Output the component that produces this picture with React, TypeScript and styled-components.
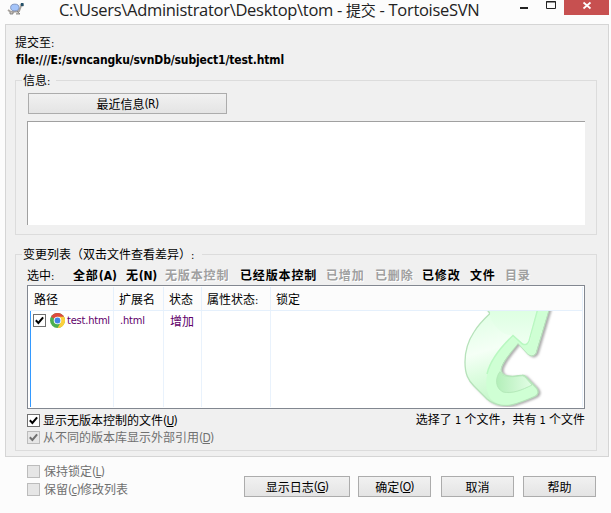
import React from "react";
import styled, { createGlobalStyle } from "styled-components";

const GlobalStyle = createGlobalStyle`
  *, *::before, *::after { box-sizing: border-box; }
  body { margin: 0; background: #fcfcfc; }
`;

const Window = styled.div`
  width: 611px;
  height: 513px;
  display: flex;
  flex-direction: column;
  background: #fcfcfc;
  color: #000;
  font: 12px/16px "Noto Sans CJK SC", sans-serif;
  white-space: nowrap;
`;

const Latin = styled.span<{ $size?: number; $spacing?: number; $bold?: boolean }>`
  font-family: "DejaVu Sans Condensed", "DejaVu Sans", sans-serif;
  font-stretch: condensed;
  font-size: ${(p) => p.$size ?? 11}px;
  letter-spacing: ${(p) => p.$spacing ?? 0}px;
  font-weight: ${(p) => (p.$bold ? 700 : 400)};
`;

const TitleBar = styled.header`
  flex: none;
  height: 24px;
  display: flex;
  align-items: flex-start;
  padding-left: 7px;
`;

const AppIcon = styled.svg`
  flex: none;
  width: 18px;
  height: 14px;
  margin-top: 2px;
`;

const Title = styled.h1`
  flex: none;
  margin: 0 0 0 34px;
  width: 454px;
  height: 24px;
  font: 400 16.5px/20px "Open Sans", "Noto Sans CJK SC", sans-serif;
  letter-spacing: -0.29px;
  color: #222;
`;

const TitleHan = styled.span`
  font-size: 15px;
`;

const WindowButtons = styled.svg`
  flex: none;
  width: 98px;
  height: 15px;
`;

const Content = styled.main`
  flex: none;
  width: 604px;
  height: 433px;
  margin-left: 5px;
  padding: 9px 11px 5px 9px;
  border: 1px solid #d5d5d5;
  background: #f0f0f0;
`;

const Label = styled.div`
  height: 16px;
`;

const Url = styled.div`
  height: 16px;
  margin: 1px 0 0 1px;
`;

const Group = styled.fieldset<{ $height: number; $gap: number }>`
  display: block;
  margin: ${(p) => p.$gap}px 0 0;
  padding: 0 11px;
  min-width: 0;
  width: 582px;
  height: ${(p) => p.$height}px;
  border: 1px solid #dcdcdc;
`;

const Legend = styled.legend<{ $width: number }>`
  margin-left: -5px;
  padding: 0 0 0 1px;
  width: ${(p) => p.$width}px;
  height: 16px;
`;

const Button = styled.button<{ $width: number }>`
  display: flex;
  align-items: center;
  justify-content: center;
  width: ${(p) => p.$width}px;
  height: 21px;
  padding: 0;
  border: 1px solid #acacac;
  background: linear-gradient(#f1f1f1, #e4e4e4);
  color: #000;
  font: inherit;
`;

const RecentButton = styled(Button)`
  margin: 5px 0 0 1px;
`;

const Message = styled.textarea`
  display: block;
  width: 558px;
  height: 104px;
  margin-top: 7px;
  padding: 0;
  border: 0 solid #a0a0a0;
  border-width: 1px 0 0 1px;
  background: #fff;
  resize: none;
`;

const Filters = styled.nav`
  display: grid;
  grid-template-columns: 46px 53px 39px 75px 86px 49px 47px 48px 35px 40px;
  height: 20px;
  margin-top: 3px;
  line-height: 20px;
`;

const Filter = styled.span<{ $off?: boolean }>`
  font-weight: 700;
  letter-spacing: 0.85px;
  color: ${(p) => (p.$off ? "#a0a0a0" : "#000")};
  text-shadow: ${(p) => (p.$off ? "1px 1px 0 #fff" : "none")};
`;

const List = styled.section`
  width: 558px;
  height: 124px;
  padding: 1px 1px 1px 2px;
  border: 1px solid #828790;
  background: #fff;
`;

const columns = "84px 50px 38px 69px 312px";

const HeaderRow = styled.div`
  display: grid;
  grid-template-columns: ${columns};
  height: 24px;
  border-bottom: 1px solid #e5f0fc;
  background: #fcfcfc;
`;

const HeaderCell = styled.div<{ $pad?: number }>`
  padding: 4px 0 0 ${(p) => p.$pad ?? 5}px;
  border-right: 1px solid #e5f0fc;
`;

const ListBody = styled.div`
  position: relative;
  display: grid;
  grid-template-columns: 83px 50px 38px 69px 312px;
  height: 96px;
  border-left: 1px solid #3399ff;
`;

const BodyCell = styled.div<{ $pad?: number }>`
  display: flex;
  align-items: center;
  height: 96px;
  padding: 0 0 77px ${(p) => p.$pad ?? 6}px;
  border-right: 1px solid #e9f2fc;
  color: #60006a;
`;

const Watermark = styled.svg`
  position: absolute;
  right: 26px;
  top: 0;
  width: 100px;
  height: 96px;
`;

const Check = styled.span<{ $off?: boolean }>`
  flex: none;
  width: 13px;
  height: 13px;
  border: 1px solid ${(p) => (p.$off ? "#bcbcbc" : "#707070")};
  background: ${(p) => (p.$off ? "#e6e6e6" : "#fff")};
  svg { display: block; }
`;

const ChromeIcon = styled.svg`
  width: 15px;
  height: 15px;
  margin: 0 2px 0 4px;
`;

const BelowList = styled.div`
  display: flex;
  justify-content: space-between;
  height: 41px;
`;

const Options = styled.div`
  padding-top: 3px;
`;

const Option = styled.label<{ $off?: boolean; $gap?: number; $h?: number }>`
  display: flex;
  align-items: center;
  gap: ${(p) => p.$gap ?? 3}px;
  height: ${(p) => p.$h ?? 17}px;
  color: ${(p) => (p.$off ? "#707070" : "#000")};
`;

const Summary = styled.div`
  padding-top: 2px;
`;

const Footer = styled.footer`
  display: flex;
  flex: 1;
  padding: 5px 0 0 27px;
`;

const FooterOptions = styled.div`
  width: 217px;
`;

const Actions = styled.div`
  display: grid;
  grid-template-columns: 114px 83px 82px 74px;
  padding-top: 14px;
`;

const Mark = ({ color }: { color: string }) => (
  <svg width="11" height="11" viewBox="0 0 11 11">
    <path d="M1.8 5.3L4.4 8L9.1 2.4" fill="none" stroke={color} strokeWidth="2" />
  </svg>
);

const Key = ({ k }: { k: string }) => (
  <Latin $size={12} $spacing={-0.8}>
    (<u>{k}</u>)
  </Latin>
);

const Arrow = () => (
  <Watermark viewBox="457 311 100 96">
    <defs>
      <linearGradient id="side" x1="0" y1="0" x2="0.25" y2="1">
        <stop offset="0" stopColor="#d9ffdf" />
        <stop offset="0.48" stopColor="#f5fff6" />
        <stop offset="0.7" stopColor="#ddfde0" />
        <stop offset="1" stopColor="#c4f7c9" />
      </linearGradient>
      <linearGradient id="head" x1="0" y1="0" x2="0" y2="1">
        <stop offset="0" stopColor="#dcffe1" />
        <stop offset="1" stopColor="#effff1" />
      </linearGradient>
      <linearGradient id="hook" x1="0" y1="0" x2="1" y2="0">
        <stop offset="0" stopColor="#b3efb9" />
        <stop offset="1" stopColor="#e2fde5" />
      </linearGradient>
      <filter id="shade" x="-10%" y="-10%" width="125%" height="120%">
        <feDropShadow dx="2" dy="1" stdDeviation="1.3" floodColor="#777" floodOpacity="0.6" />
      </filter>
    </defs>
    <path
      filter="url(#shade)"
      fill="url(#side)"
      stroke="#b6e2ba"
      strokeWidth="1.3"
      d="M486 308L490 313.500C483 320 477 327 474 332C468 341 465 351 465 362C465 374 468 380 474 386L487 399C493 404.500 500 406 510 405C519 403 528 399 535.500 396Q540 393 536.500 388L526 377Q524 374.500 521 375.500C512 377 502 377 501 370C501 363 511 352 518 343L528 354Q533 358 536 353L550 306Z"
    />
    <path
      fill="url(#head)"
      d="M491 311C486 317 500 337 513 335L522 343Q526 345 528 340L537 308Z"
    />
    <path
      fill="#cfffd4"
      d="M513 335.500C504 344 497 353 492 362C486 373 483.500 386 490 398C495 404 502 405.500 510 404.500C518 403 527 399 535 395.500Q539 393 536 389L532 385C524 390 515 394 506 393C496 390 494 379 500 371C500 363 511 352 518 343L528 354Q533 357 535.500 352L549 308H538L530 341Q528 346 523.500 344Z"
    />
    <path
      d="M487 374C490 361 502 346 513 335.500L522.500 344Q527 346 529 341L538 308"
      fill="none"
      stroke="#b9f8c1"
      strokeWidth="1.5"
    />
    <path
      d="M500 371.500C495 378 495 388 503 392C512 394 522 390 532 385L525 377Q523 375 519 376C510 377.500 502 377 500 371.500Z"
      fill="url(#hook)"
      stroke="#b0e6b5"
      strokeWidth="0.8"
    />
  </Watermark>
);

export default function App() {
  return (
    <Window>
      <GlobalStyle />
      <TitleBar>
        <AppIcon viewBox="0 0 18 14">
          <path d="M1 8L4 10L12 9L14 4" fill="none" stroke="#a7a29d" strokeWidth="2" />
          <path d="M3 10V12H6V10M10 9L13 12H9" fill="#c7c0b9" stroke="#777" strokeWidth="0.8" />
          <ellipse cx="7.800" cy="5.500" rx="4.200" ry="3.400" fill="#a4c4fa" stroke="#7588b0" strokeWidth="0.8" />
          <ellipse cx="14.800" cy="3" rx="2.200" ry="1.700" fill="#a5a5a5" />
          <path d="M14 1h2.500v3H14z" fill="#22506a" />
        </AppIcon>
        <Title>
          C:\Users\Administrator\Desktop\tom - <TitleHan>提交</TitleHan> - TortoiseSVN
        </Title>
        <WindowButtons viewBox="0 0 98 15">
          <path d="M7 7h8v2H7z" fill="#222" />
          <path d="M33.500 1.500h9v7h-9z M33 2h10" fill="none" stroke="#222" />
          <path d="M51 0h45v15H51z" fill="#c75050" />
          <path d="M70.500 2.500L77.500 8.500M77.500 2.500L70.500 8.500" stroke="#fff" strokeWidth="1.700" />
        </WindowButtons>
      </TitleBar>
      <Content>
        <Label>
          提交至<Latin>:</Latin>
        </Label>
        <Url>
          <Latin $bold $size={12} $spacing={-0.13}>file:///E:/svncangku/svnDb/subject1/test.html</Latin>
        </Url>
        <Group $height={163} $gap={5}>
          <Legend $width={34}>
            信息<Latin>:</Latin>
          </Legend>
          <RecentButton $width={199}>
            最近信息<Latin $size={12} $spacing={-0.7}>(R)</Latin>
          </RecentButton>
          <Message />
        </Group>
        <Group $height={205} $gap={11}>
          <Legend $width={180}>
            变更列表（双击文件查看差异）<Latin>:</Latin>
          </Legend>
          <Filters>
            <span>
              选中<Latin>:</Latin>
            </span>
            <Filter>
              全部<Latin $bold $size={12}>(A)</Latin>
            </Filter>
            <Filter>
              无<Latin $bold $size={12} $spacing={-0.3}>(N)</Latin>
            </Filter>
            <Filter $off>无版本控制</Filter>
            <Filter>已经版本控制</Filter>
            <Filter $off>已增加</Filter>
            <Filter $off>已删除</Filter>
            <Filter>已修改</Filter>
            <Filter>文件</Filter>
            <Filter $off>目录</Filter>
          </Filters>
          <List>
            <HeaderRow>
              <HeaderCell $pad={4}>路径</HeaderCell>
              <HeaderCell>扩展名</HeaderCell>
              <HeaderCell>状态</HeaderCell>
              <HeaderCell>
                属性状态<Latin>:</Latin>
              </HeaderCell>
              <HeaderCell>锁定</HeaderCell>
            </HeaderRow>
            <ListBody>
              <BodyCell $pad={2}>
                <Check>
                  <Mark color="#000" />
                </Check>
                <ChromeIcon viewBox="0 0 16 16">
                  <circle cx="8" cy="8" r="8" fill="#4caf50" />
                  <path d="M8 8L1.070 4A8 8 0 0 1 14.930 4Z" fill="#dd4b3e" />
                  <path d="M8 4H14.930A8 8 0 0 1 8 16L11.500 10Z" fill="#fdd03b" />
                  <circle cx="8" cy="8" r="4" fill="#fff" />
                  <circle cx="8" cy="8" r="3.100" fill="#4285e8" />
                </ChromeIcon>
                <Latin $spacing={-0.2}>test.html</Latin>
              </BodyCell>
              <BodyCell>
                <Latin $spacing={-0.2}>.html</Latin>
              </BodyCell>
              <BodyCell>增加</BodyCell>
              <BodyCell />
              <BodyCell />
              <Arrow />
            </ListBody>
          </List>
          <BelowList>
            <Options>
              <Option>
                <Check>
                  <Mark color="#000" />
                </Check>
                <span>
                  显示无版本控制的文件<Key k="U" />
                </span>
              </Option>
              <Option $off>
                <Check $off>
                  <Mark color="#707070" />
                </Check>
                <span>
                  从不同的版本库显示外部引用<Key k="D" />
                </span>
              </Option>
            </Options>
            <Summary>
              选择了<Latin> 1 </Latin>个文件，共有<Latin> 1 </Latin>个文件
            </Summary>
          </BelowList>
        </Group>
      </Content>
      <Footer>
        <FooterOptions>
          <Option $off $gap={4} $h={19}>
            <Check $off />
            <span>
              保持锁定<Key k="L" />
            </span>
          </Option>
          <Option $off $gap={4} $h={17}>
            <Check $off />
            <span>
              保留<Key k="c" />修改列表
            </span>
          </Option>
        </FooterOptions>
        <Actions>
          <Button $width={106}>
            显示日志
            <Key k="G" />
          </Button>
          <Button $width={73}>
            确定
            <Key k="O" />
          </Button>
          <Button $width={73}>取消</Button>
          <Button $width={73}>帮助</Button>
        </Actions>
      </Footer>
    </Window>
  );
}
